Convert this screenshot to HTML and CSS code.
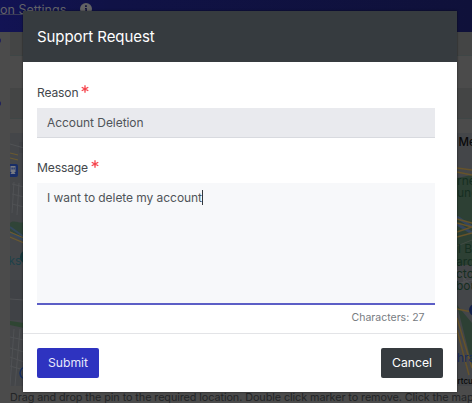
FILE: index.html
```html
<!DOCTYPE html>
<html lang="en">
<head>
<meta charset="utf-8">
<title>Support Request</title>
<link rel="stylesheet" href="styles.css">
</head>
<body>
<div class="page">
  <header class="topbar">
    <div class="tab"><span>on Settings</span>
      <svg class="info" viewBox="0 0 12 12"><circle cx="6" cy="6" r="6" fill="#626264"/><path d="M5 5h1.800v3.600h1v1H4.400v-1h1V6H5zM5.100 2.200h1.700v1.700H5.100z" fill="#0d0e3b"/></svg>
    </div>
  </header>
  <div class="field-row"><i></i></div>
  <div class="spacer"></div>
  <div class="field-row second"><i></i></div>
  <svg class="map" viewBox="10 133 462 253">
    <rect x="10" y="133" width="462" height="253" fill="#444649"/>
    <path d="M19 142h13v11H19zM10 280h14v40H10z" fill="#404246"/>
    <g fill="none" stroke="#505255" stroke-width="1">
      <path d="M10 144l14 4M12 184l12 3M12 194l12 3M12 204l12 3M14 182l-2 31M19 183l-2 32M10 299l14 1M10 337l14 3M10 348l14 4M10 357l14 5M10 366l14 4M14 329l-4 57M20 329l-5 57"/>
      <path d="M457 270l15 17M457 284l15-4M464 270v16"/>
    </g>
    <path d="M10 223c4-4 9 1 14-1v18l-14-9z" fill="#304438"/>
    <path d="M10 227l14 10M10 233l14 7" stroke="#34485e" stroke-width="2"/>
    <path d="M10 321l14 2v5l-14-3z" fill="#2f4533"/>
    <g fill="none" stroke="#6b5a30" stroke-width="1.2"><path d="M10 153l8 2M10 158l8 2M10 232l14 6M10 237l14 6"/></g>
    <path d="M10 164h6q2 0 2 2v9q0 2-2 2h-6z" fill="#182d66"/>
    <path d="M10.500 166h5v6h-5zM11.500 167.500h1.200v2h-1.200zm2 0h1.200v2h-1.200zM10.500 174l1.200-2h2.600l1.200 2z" fill="#777a82" fill-rule="evenodd"/>
    <text x="8.500" y="265" class="place water">ks</text>
    <circle cx="27" cy="257" r="7" fill="#17383c"/>
    <circle cx="26" cy="373" r="6" fill="none" stroke="#162f62" stroke-width="1.500"/>
    <path d="M457 178l15-3v90h-15zM457 305l15 18v42z" fill="#2d4034"/>
    <path d="M457 217l15 10M457 224l15 9" stroke="#34465e" stroke-width="3"/>
    <path d="M457 246l15-6" stroke="#424a43" stroke-width="1"/>
    <g fill="none" stroke="#66532a" stroke-width="1.500"><path d="M457 168l15 2M457 172l15 3M457 219l15 4M457 223l15 4M457 232l15-5M457 237l15-4M457 309l15 3M457 330l12 45M457 318l15 50"/></g>
    <circle cx="475" cy="310" r="6" fill="#13214b"/>
    <text x="458.500" y="146" class="place strong">Me</text>
    <text x="457" y="184.500" class="place park">rne</text>
    <text x="457" y="197" class="place park">und</text>
    <text x="458" y="253" class="place park">l B</text>
    <text x="456" y="265.500" class="place park">ard</text>
    <text x="456" y="277.500" class="place park">ctor</text>
    <text x="456" y="290" class="place park">bou</text>
    <text x="457" y="362" class="place street">hra</text>
    <text x="457.500" y="384" class="credit">rtcu</text>
  </svg>
  <p class="hint">Drag and drop the pin to the required location. Double click marker to remove. Click the map</p>
</div>

<div class="overlay">
  <section class="modal">
    <header class="modal-head"><h1>Support Request</h1></header>
    <div class="modal-body">
      <div class="label"><span>Reason</span><svg class="star" viewBox="0 0 8 8"><path d="M4 .3v7.4M.7 2.2l6.600 3.600M.7 5.800l6.600-3.600"/></svg></div>
      <div class="select">Account Deletion</div>
      <div class="label message"><span>Message</span><svg class="star" viewBox="0 0 8 8"><path d="M4 .3v7.4M.7 2.2l6.600 3.600M.7 5.800l6.600-3.600"/></svg></div>
      <div class="textarea"><span>I want to delete my account</span><i class="caret"></i></div>
      <div class="count">Characters: 27</div>
    </div>
    <footer class="modal-foot">
      <button class="btn submit">Submit</button>
      <button class="btn cancel">Cancel</button>
    </footer>
  </section>
</div>
</body>
</html>
```
FILE: styles.css
```css
* { box-sizing: border-box; }
body {
  margin: 0;
  width: 472px;
  height: 403px;
  overflow: hidden;
  position: relative;
  font-family: Inter, sans-serif;
  background: #4b4b4b;
}
.page { height: 403px; overflow: hidden; }
.topbar { height: 32px; background: linear-gradient(90deg, #121354 0, #101246 110px, #0f113a 100%); }
.tab {
  height: 15px;
  display: flex;
  gap: 13px;
  font-size: 12.5px;
  line-height: 19px;
  color: #626268;
  border-bottom: 1px solid #393a58;
  width: 93px;
  white-space: nowrap;
}
.tab span { width: 67px; }
.info { width: 12px; height: 12px; flex: none; margin-top: 3px; }
.field-row { height: 24px; padding-left: 10px; position: relative; }
.field-row i {
  display: block;
  height: 100%;
  background: #444545;
  border-bottom: 1px solid #3f4646;
}
.field-row::before {
  content: "";
  position: absolute;
  left: -3px;
  top: 6px;
  width: 4px;
  height: 5px;
  border-radius: 50%;
  background: #20205c;
}
.spacer { height: 32px; }
.field-row.second { height: 31px; }
.field-row.second::before { top: 13px; }
.map { display: block; margin: 14px 0 0 10px; width: 462px; height: 253px; }
.place { font-size: 12px; }
.water { fill: #1e4149; }
.park { fill: #162e21; }
.strong { fill: #090909; font-weight: 500; font-size: 11.5px; }
.street { fill: #1a2c5c; }
.credit { fill: #070707; font-size: 8px; font-weight: 500; }
.hint {
  margin: 3px 0 0 10px;
  font-size: 10.8px;
  line-height: 18px;
  color: #222426;
  white-space: nowrap;
  letter-spacing: -.07px;
}
.overlay { position: absolute; inset: 0; padding: 11px 15px 0 23px; }
.modal {
  width: 434px;
  height: 381px;
  background: #fff;
  box-shadow: 0 0 2px rgba(0, 0, 0, .6);
  display: flex;
  flex-direction: column;
}
.modal-head {
  height: 51px;
  background: #363b3f;
  padding: 1px 14px 0;
  display: flex;
  align-items: center;
}
h1 { margin: 0; font-size: 15px; font-weight: 420; color: #fff; line-height: 20px; letter-spacing: -.07px; }
.modal-body { height: 272px; padding: 22px 22.5px 0 14px; border-bottom: 1px solid #e3e4e7; }
.label { display: flex; gap: 3px; height: 18px; font-size: 12.1px; line-height: 18px; color: #43474c; letter-spacing: -.15px; }
.star { width: 8px; height: 8px; margin-top: 1px; fill: none; stroke: #f6434b; stroke-width: 1.3; }
.select {
  height: 30px;
  margin-top: 6px;
  padding: 0 10px;
  background: #e9eaee;
  border-bottom: 1px solid #d8dadf;
  color: #505459;
  font-size: 12px;
  line-height: 29px;
  letter-spacing: -.05px;
}
.message { margin-top: 21px; }
.textarea {
  height: 122px;
  margin-top: 6px;
  padding: 7px 10px;
  background: #f7f8fa;
  border-bottom: 2px solid #5c5ec6;
  color: #505459;
  font-size: 12px;
  line-height: 16px;
  letter-spacing: -.06px;
  display: flex;
}
.caret { width: 1px; height: 15px; background: #34383c; }
.count { padding: 5px 10px 0 0; text-align: right; font-size: 10.5px; line-height: 16px; color: #777b81; }
.modal-foot { flex: 1; padding: 14px 14px; display: flex; justify-content: space-between; align-items: flex-start; }
.btn {
  height: 30px;
  padding: 0;
  width: 62px;
  border: 0;
  border-radius: 2px;
  font: 400 12.2px/30px Inter, sans-serif;
  color: #fff;
}
.submit { background: #2e33c0; color: #e6e7fb; }
.cancel { background: #363b3f; }
```
